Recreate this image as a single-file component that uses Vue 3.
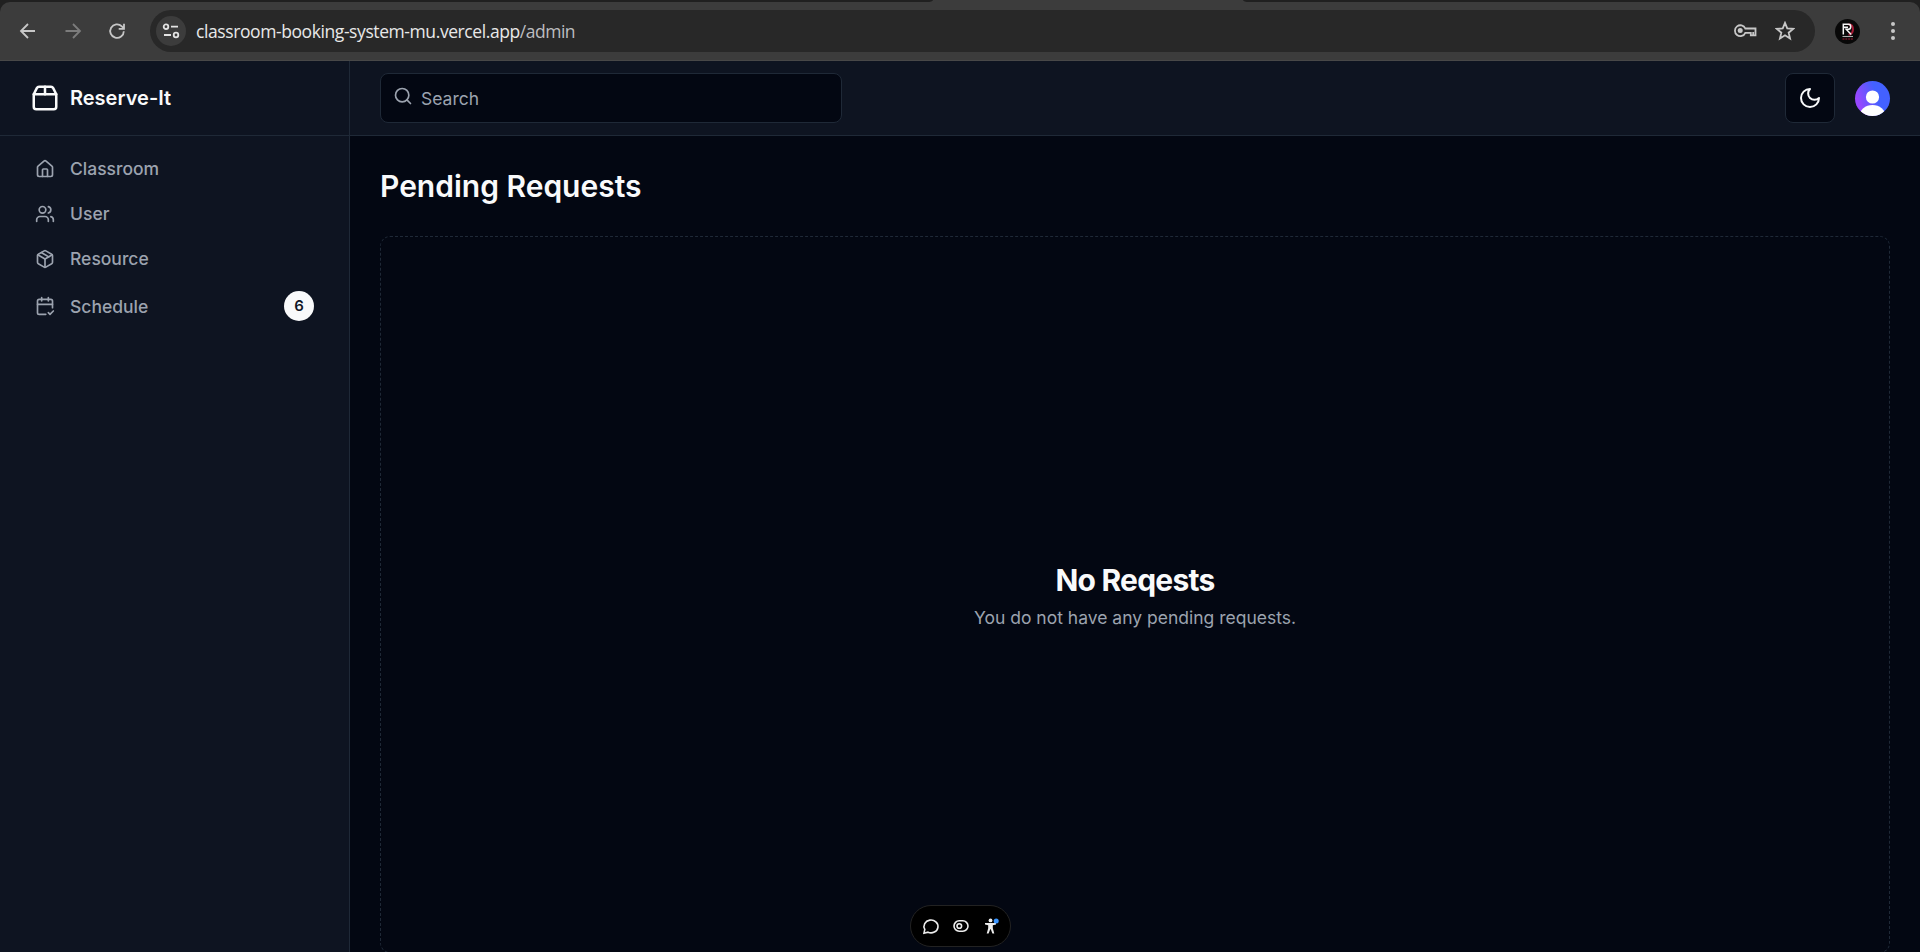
<script setup>
const navItems = [
  { label: 'Classroom', icon: ['M15 21v-8a1 1 0 0 0-1-1h-4a1 1 0 0 0-1 1v8', 'M3 10a2 2 0 0 1 .709-1.528l7-5.999a2 2 0 0 1 2.582 0l7 5.999A2 2 0 0 1 21 10v9a2 2 0 0 1-2 2H5a2 2 0 0 1-2-2z'] },
  { label: 'User', icon: ['M16 21v-2a4 4 0 0 0-4-4H6a4 4 0 0 0-4 4v2', 'M5 7a4 4 0 1 0 8 0a4 4 0 1 0-8 0', 'M22 21v-2a4 4 0 0 0-3-3.87', 'M16 3.13a4 4 0 0 1 0 7.75'] },
  { label: 'Resource', icon: ['m7.5 4.27 9 5.15', 'M21 8a2 2 0 0 0-1-1.73l-7-4a2 2 0 0 0-2 0l-7 4A2 2 0 0 0 3 8v8a2 2 0 0 0 1 1.73l7 4a2 2 0 0 0 2 0l7-4A2 2 0 0 0 21 16Z', 'm3.3 7 8.7 5 8.7-5', 'M12 22V12'] },
  { label: 'Schedule', badge: 6, icon: ['M8 2v4', 'M16 2v4', 'M21 14V6a2 2 0 0 0-2-2H5a2 2 0 0 0-2 2v14a2 2 0 0 0 2 2h8', 'M3 10h18', 'm16 20 2 2 4-4'] },
]
</script>

<template>
  <div class="window">
    <header class="chrome">
      <div class="tabstrip"><div class="tab-gap left"></div><div class="tab-active"></div><div class="tab-gap right"></div></div>
      <div class="toolbar">
        <svg class="tool" viewBox="0 0 20 20"><path d="M17 10H3M10 3L3 10l7 7" /></svg>
        <svg class="tool dim" viewBox="0 0 20 20"><path d="M2.500 10h14M10 3l7 7-7 7" /></svg>
        <svg class="tool" viewBox="0 0 20 20"><path d="M16.8 10.2A6.800 6.800 0 1 1 14.8 5.3L17 7.500M17 2.700v5.100h-5.300" /></svg>
        <div class="omnibox">
          <span class="site">
            <svg width="18" height="18" viewBox="0 0 18 18"><circle cx="4" cy="4.700" r="2.300" /><path d="M9 4.700h7M2 13h7" /><circle cx="14" cy="13" r="2.300" /></svg>
          </span>
          <span class="url">classroom-booking-system-mu.vercel.app<span class="path">/admin</span></span>
          <svg class="key" width="24" height="16" viewBox="0 0 24 16"><path d="M12.3 5.500H22.500V12.300H17.800V9.800H12.300A5.400 5.400 0 1 1 12.300 5.500ZM20.200 12V9" /><circle class="solid" cx="7.200" cy="7.600" r="2.500" /></svg>
          <svg class="star" width="20" height="20" viewBox="0 0 20 20"><path d="M10 1.900l2.250 5.500 5.950.45-4.550 3.850 1.420 5.800L10 14.350 4.930 17.500l1.420-5.800L1.800 7.850l5.950-.45z" /></svg>
        </div>
        <svg class="profile" viewBox="0 0 25 25">
          <circle cx="12.5" cy="12.5" r="12.5" fill="#080808" />
          <path d="M13.5 5.500h1.500q3 1 3 4.800t-3 5.200h-1.500" fill="none" stroke="#a51a35" stroke-width="2" />
          <path d="M8.300 15.500V5.300h5.400q2 0 2 2.400t-2 2.600h-2.500l5 5.300M9 8.200h4" fill="none" stroke="#f5f5f5" stroke-width="1.500" />
          <path d="M7.500 17.500h10.500" stroke="#aaa" stroke-width="1.100" />
          <path d="M7.500 20h10.500" stroke="#6d1626" stroke-width="1.300" stroke-dasharray="2 .8" />
        </svg>
        <span class="more"><i></i><i></i><i></i></span>
      </div>
    </header>

    <div class="app">
      <aside class="sidebar">
        <div class="brand">
          <svg class="lucide" width="30" height="30" viewBox="0 0 24 24"><path d="M3 9h18v10a2 2 0 0 1-2 2H5a2 2 0 0 1-2-2V9Z" /><path d="m3 9 2.450-4.900A2 2 0 0 1 7.240 3h9.520a2 2 0 0 1 1.800 1.100L21 9" /><path d="M12 3v6" /></svg>
          <span>Reserve-It</span>
        </div>
        <nav>
          <a v-for="item in navItems" :key="item.label">
            <svg class="lucide" width="20" height="20" viewBox="0 0 24 24"><path v-for="d in item.icon" :key="d" :d="d" /></svg>
            <span>{{ item.label }}</span>
            <b v-if="item.badge">{{ item.badge }}</b>
          </a>
        </nav>
      </aside>

      <section class="content">
        <header class="topbar">
          <div class="search">
            <svg class="lucide" width="20" height="20" viewBox="0 0 24 24"><circle cx="11" cy="11" r="8" /><path d="m21 21-4.300-4.300" /></svg>
            <span>Search</span>
          </div>
          <button class="theme">
            <svg class="lucide" width="24" height="24" viewBox="0 0 24 24"><path d="M12 3a6 6 0 0 0 9 9 9 9 0 1 1-9-9Z" /></svg>
          </button>
          <div class="avatar">
            <svg viewBox="0 0 35 35"><circle cx="17.500" cy="16" r="6.600" /><ellipse cx="17.500" cy="35" rx="13" ry="11" /></svg>
          </div>
        </header>
        <main>
          <h1>Pending Requests</h1>
          <div class="empty">
            <h2>No Reqests</h2>
            <p>You do not have any pending requests.</p>
          </div>
        </main>
      </section>
    </div>

    <div class="dock">
      <svg width="18" height="18" viewBox="0 0 18 18"><path d="M2 16.200l.8-3.800A7 6.400 0 1 1 6 15.200Z" /></svg>
      <svg width="18" height="18" viewBox="0 0 18 18"><rect x="2" y="3.800" width="14" height="10.400" rx="5.200" /><circle cx="7.300" cy="9" r="2.300" /></svg>
      <svg width="18" height="18" viewBox="0 0 18 18"><circle class="fill" cx="8.500" cy="3.400" r="1.900" /><path class="fill" d="M3 6h11v1.500l-3.200.7v3l1.500 5.300h-1.900L8.800 12.200h-.6l-1.600 4.300H4.700l1.500-5.300v-3L3 7.500z" /><circle class="dot" cx="14.200" cy="4" r="2.500" /></svg>
    </div>
  </div>
</template>

<style>
html, body { margin: 0; height: 100%; overflow: hidden; background: #030712; }
</style>

<style scoped>
* { box-sizing: border-box; }
.window { position: relative; width: 1920px; height: 952px; overflow: hidden; display: flex; flex-direction: column; background: #030712; color: #f9fafb; font-family: Inter, sans-serif; }
svg { flex: none; display: block; }
.chrome { height: 61px; flex: none; background: linear-gradient(#202020 12px, #3c3c3c 12px); border-bottom: 1px solid #484848; }
.tabstrip { display: flex; height: 2px; background: #3c3c3c; }
.tab-gap { background: #202020; }
.tab-gap.left { width: 933px; border-bottom-right-radius: 6px 2px; }
.tab-active { width: 310px; }
.tab-gap.right { flex: 1; border-bottom-left-radius: 6px 2px; }
.toolbar { height: 58px; display: flex; align-items: center; background: #3c3c3c; border-radius: 10px 10px 0 0; padding-left: 18px; }
.tool { width: 20px; height: 20px; margin-right: 24.5px; fill: none; stroke: #c7c7c7; stroke-width: 1.8; }
.tool.dim { stroke: #7c7c7c; }
.omnibox { width: 1665px; height: 42px; margin-left: -1.5px; border-radius: 21px; background: #282828; display: flex; align-items: center; padding-left: 6px; }
.site { width: 30px; height: 30px; border-radius: 50%; background: #3c3c3c; display: grid; place-items: center; }
.site svg { fill: none; stroke: #e3e3e3; stroke-width: 1.8; }
.url { flex: 1; margin-left: 10px; font: 17.5px/24px "Open Sans", sans-serif; letter-spacing: -0.41px; color: #e8e8e8; }
.path { color: #bdbdc0; letter-spacing: -0.5px; }
.key { margin-right: 18px; }
.key, .star { fill: none; stroke: #c7c7c7; stroke-width: 1.8; }
.key .solid { fill: #c7c7c7; stroke: none; }
.star { margin-right: 20px; }
.profile { width: 25px; height: 25px; margin-left: 20px; }
.more { margin-left: 30.5px; display: flex; flex-direction: column; gap: 3px; }
.more i { width: 4px; height: 4px; border-radius: 50%; background: #c7c7c7; }

.app { flex: 1; min-height: 0; display: flex; }
.lucide { fill: none; stroke: currentColor; stroke-width: 2; stroke-linecap: round; stroke-linejoin: round; }
.sidebar { width: 350px; background: #0e1421; border-right: 1px solid #1f2937; }
.brand { height: 75px; display: flex; align-items: center; gap: 10px; padding-left: 30px; border-bottom: 1px solid #1f2937; font-size: 20px; font-weight: 600; }
nav { padding: 10px 20px 0; }
nav a { display: flex; align-items: center; gap: 15px; padding: 10px 15px; color: #9ca3af; font-size: 17.5px; line-height: 25px; font-weight: 500; }
nav b { margin-left: auto; width: 30px; height: 30px; border-radius: 50%; background: #f9fafb; color: #111827; font-size: 15px; line-height: 29px; font-weight: 600; text-align: center; }
.content { flex: 1; display: flex; flex-direction: column; }
.topbar { height: 75px; flex: none; display: flex; align-items: center; padding: 0 30px; background: #0e1421; border-bottom: 1px solid #1f2937; }
.search { width: 462px; height: 50px; display: flex; align-items: center; gap: 8px; padding-left: 12px; border: 1px solid #1f2937; border-radius: 8px; background: #030712; color: #9ca3af; font-size: 17.5px; }
.search svg { margin-bottom: 4px; }
.theme { margin-left: auto; width: 50px; height: 50px; padding: 0; display: grid; place-items: center; border: 1px solid #1f2937; border-radius: 8px; background: #030712; color: #f9fafb; }
.avatar { width: 35px; height: 35px; margin-left: 20px; border-radius: 50%; overflow: hidden; background: linear-gradient(70deg, #9747ff 18%, #4361ff 62%); fill: #fff; }
main { flex: 1; padding: 30px 30px 0; }
h1, h2, p { margin: 0; }
h1 { font-size: 30px; line-height: 40px; font-weight: 600; }
.empty { height: 717px; margin-top: 30px; display: flex; flex-direction: column; align-items: center; justify-content: center; border: 1px dashed #1f2937; border-radius: 10px; }
h2 { font-size: 30px; line-height: 40px; font-weight: 700; letter-spacing: -0.75px; }
p { margin-top: 5px; font-size: 17.5px; line-height: 25px; color: #9ca3af; }
.dock { position: absolute; left: 910px; top: 905px; width: 101px; height: 42px; border: 1px solid #222; border-radius: 21px; background: #000; display: flex; align-items: center; justify-content: center; gap: 12px; }
.dock svg { fill: none; stroke: #ededed; stroke-width: 1.6; }
.dock .fill { fill: #ededed; stroke: none; }
.dock .dot { fill: #3b96ff; stroke: none; }
</style>
